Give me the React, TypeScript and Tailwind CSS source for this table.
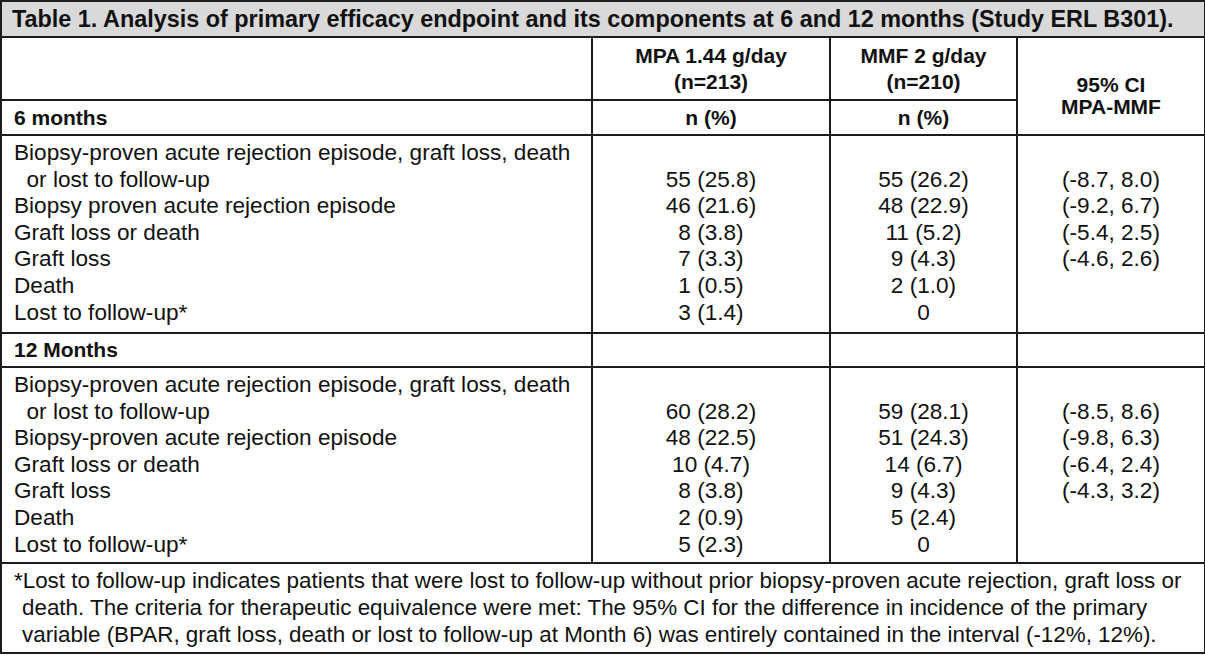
import React from "react";

const six = {
  labels: [
    "Biopsy-proven acute rejection episode, graft loss, death",
    "\u00a0 or lost to follow-up",
    "Biopsy proven acute rejection episode",
    "Graft loss or death",
    "Graft loss",
    "Death",
    "Lost to follow-up*",
  ],
  mpa: ["", "55 (25.8)", "46 (21.6)", "8 (3.8)", "7 (3.3)", "1 (0.5)", "3 (1.4)"],
  mmf: ["", "55 (26.2)", "48 (22.9)", "11 (5.2)", "9 (4.3)", "2 (1.0)", "0"],
  ci: ["", "(-8.7, 8.0)", "(-9.2, 6.7)", "(-5.4, 2.5)", "(-4.6, 2.6)", "", ""],
};

const twelve = {
  labels: [
    "Biopsy-proven acute rejection episode, graft loss, death",
    "\u00a0 or lost to follow-up",
    "Biopsy-proven acute rejection episode",
    "Graft loss or death",
    "Graft loss",
    "Death",
    "Lost to follow-up*",
  ],
  mpa: ["", "60 (28.2)", "48 (22.5)", "10 (4.7)", "8 (3.8)", "2 (0.9)", "5 (2.3)"],
  mmf: ["", "59 (28.1)", "51 (24.3)", "14 (6.7)", "9 (4.3)", "5 (2.4)", "0"],
  ci: ["", "(-8.5, 8.6)", "(-9.8, 6.3)", "(-6.4, 2.4)", "(-4.3, 3.2)", "", ""],
};

function Lines({ items, center }: { items: string[]; center?: boolean }) {
  return (
    <div className={center ? "flex flex-col items-center" : "flex flex-col"}>
      {items.map((t, i) => (
        <div key={i} className="h-[26.6px] leading-[26.6px] whitespace-pre">
          {t === "" ? "\u00a0" : t}
        </div>
      ))}
    </div>
  );
}

const cell = "border-2 border-[#1c1c1c]";

function Block({ d, h }: { d: typeof six; h: string }) {
  return (
    <tr className="text-[22.6px]">
      <td className={`${cell} align-top pl-[12px] pt-[4px] ${h}`}>
        <Lines items={d.labels} />
      </td>
      <td className={`${cell} align-top pt-[4px]`}>
        <Lines items={d.mpa} center />
      </td>
      <td className={`${cell} align-top pt-[4px]`}>
        <Lines items={d.mmf} center />
      </td>
      <td className={`${cell} align-top pt-[4px]`}>
        <Lines items={d.ci} center />
      </td>
    </tr>
  );
}

export default function App() {
  return (
    <div
      className="w-[1205px] h-[656px] bg-white text-[#111] text-[20px] overflow-hidden"
      style={{ fontFamily: '"Liberation Sans", Arial, sans-serif' }}
    >
      <table className="border-collapse table-fixed w-[1204px]">
        <colgroup>
          <col className="w-[591px]" />
          <col className="w-[238px]" />
          <col className="w-[187px]" />
          <col className="w-[188px]" />
        </colgroup>
        <tbody>
          <tr>
            <td
              colSpan={4}
              className={`${cell} bg-[#d9d9d9] h-[36px] pl-[10px] font-bold text-[23.4px] leading-[26px] whitespace-nowrap`}
            >
              Table 1. Analysis of primary efficacy endpoint and its components at 6 and 12 months (Study ERL B301).
            </td>
          </tr>
          <tr>
            <td className={`${cell} h-[63px]`}></td>
            <td className={`${cell} text-center font-bold text-[21px] leading-[26px] align-middle`}>
              MPA 1.44 g/day
              <br />
              (n=213)
            </td>
            <td className={`${cell} text-center font-bold text-[21px] leading-[26px] align-middle`}>
              MMF 2 g/day
              <br />
              (n=210)
            </td>
            <td rowSpan={2} className={`${cell} text-center font-bold text-[21px] leading-[22px] align-middle pt-[20px]`}>
              95% CI
              <br />
              MPA-MMF
            </td>
          </tr>
          <tr>
            <td className={`${cell} h-[35px] pl-[12px] font-bold text-[21px] leading-[26px]`}>6 months</td>
            <td className={`${cell} text-center font-bold text-[21px] leading-[26px]`}>n (%)</td>
            <td className={`${cell} text-center font-bold text-[21px] leading-[26px]`}>n (%)</td>
          </tr>
          <Block d={six} h="h-[198px]" />
          <tr>
            <td className={`${cell} h-[34px] pl-[12px] font-bold text-[21px] leading-[24px]`}>12 Months</td>
            <td className={cell}></td>
            <td className={cell}></td>
            <td className={cell}></td>
          </tr>
          <Block d={twelve} h="h-[196px]" />
          <tr>
            <td colSpan={4} className={`${cell} h-[90px] pl-[12px] align-top pt-[3px] text-[22.4px]`}>
              <div className="leading-[27px] whitespace-nowrap">
                <div>
                  *Lost to follow-up indicates patients that were lost to follow-up without prior biopsy-proven acute rejection, graft loss or
                </div>
                <div className="pl-[8px]">
                  death. The criteria for therapeutic equivalence were met: The 95% CI for the difference in incidence of the primary
                </div>
                <div className="pl-[8px]">
                  variable (BPAR, graft loss, death or lost to follow-up at Month 6) was entirely contained in the interval (-12%, 12%).
                </div>
              </div>
            </td>
          </tr>
        </tbody>
      </table>
    </div>
  );
}
